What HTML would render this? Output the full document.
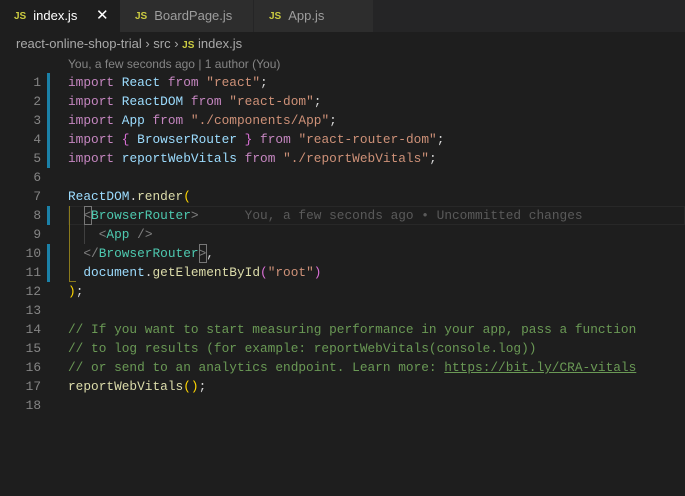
<!DOCTYPE html>
<html><head><meta charset="utf-8"><style>
*{margin:0;padding:0;box-sizing:border-box}
body{width:685px;height:496px;background:#1e1e1e;overflow:hidden;position:relative;font-family:"Liberation Sans",sans-serif}
.tabs{position:absolute;left:0;top:0;width:685px;height:32px;background:#252526}
.tab{position:absolute;top:0;height:32px;font-size:13px;line-height:32px;color:#9d9d9d}
.tab .js{color:#cbcb41;font-weight:bold;font-size:10px;margin-right:7px;vertical-align:1px}
.crumb{position:absolute;left:16px;top:35px;font-size:13px;color:#a9a9a9;line-height:18px}
.crumb .js{color:#cbcb41;font-weight:bold;font-size:10px}
.blame{position:absolute;left:68px;top:57px;font-size:12px;color:#858585}
.ln{position:absolute;left:0;width:41px;text-align:right;font-family:"Liberation Mono",monospace;font-size:12.8px;color:#858585;line-height:19px}
.code{position:absolute;left:68px;font-family:"Liberation Mono",monospace;font-size:12.8px;line-height:19px;white-space:pre;color:#d4d4d4}
.g{position:absolute;left:47px;width:3px;background:#1b81a8}
.k{color:#c586c0}.v{color:#9cdcfe}.s{color:#ce9178}.t{color:#4ec9b0}.f{color:#dcdcaa}.c{color:#6a9955}.y{color:#ffd700}.p{color:#da70d6}.b{color:#808080}
</style></head><body>
<div class="tabs">
<div class="tab" style="left:0;width:120px;background:#1e1e1e;color:#fff;padding-left:14px"><span class="js">JS</span>index.js<span style="position:absolute;left:96px;font-size:15px">✕</span></div>
<div class="tab" style="left:120px;width:133px;background:#2d2d2d;padding-left:15px"><span class="js">JS</span>BoardPage.js</div>
<div class="tab" style="left:254px;width:119px;background:#2d2d2d;padding-left:15px"><span class="js">JS</span>App.js</div>
</div>
<div class="crumb">react-online-shop-trial › src › <span class="js">JS</span> index.js</div>
<div class="blame">You, a few seconds ago | 1 author (You)</div>
<div class="g" style="top:73px;height:95px"></div>
<div class="g" style="top:206px;height:19px"></div>
<div class="g" style="top:244px;height:38px"></div>
<div style="position:absolute;left:68px;top:206px;width:617px;height:19px;border:1px solid #282828"></div>
<div style="position:absolute;left:69px;top:206px;width:1px;height:76px;background:#8a7a1c"></div>
<div style="position:absolute;left:69px;top:281px;width:7px;height:1px;background:#8a7a1c"></div>
<div style="position:absolute;left:84px;top:206px;width:8px;height:19px;border:1px solid #777"></div>
<div style="position:absolute;left:84px;top:225px;width:1px;height:19px;background:#404040"></div>
<div style="position:absolute;left:199px;top:244px;width:8px;height:19px;border:1px solid #777"></div>
<div class="ln" style="top:73px">1<br>2<br>3<br>4<br>5<br>6<br>7<br>8<br>9<br>10<br>11<br>12<br>13<br>14<br>15<br>16<br>17<br>18</div>
<div class="code" style="top:73px"><span class="k">import</span> <span class="v">React</span> <span class="k">from</span> <span class="s">"react"</span>;
<span class="k">import</span> <span class="v">ReactDOM</span> <span class="k">from</span> <span class="s">"react-dom"</span>;
<span class="k">import</span> <span class="v">App</span> <span class="k">from</span> <span class="s">"./components/App"</span>;
<span class="k">import</span> <span class="p">{</span> <span class="v">BrowserRouter</span> <span class="p">}</span> <span class="k">from</span> <span class="s">"react-router-dom"</span>;
<span class="k">import</span> <span class="v">reportWebVitals</span> <span class="k">from</span> <span class="s">"./reportWebVitals"</span>;

<span class="v">ReactDOM</span>.<span class="f">render</span><span class="y">(</span>
  <span class="b">&lt;</span><span class="t">BrowserRouter</span><span class="b">&gt;</span>      <span style="color:#5a5a5a">You, a few seconds ago • Uncommitted changes</span>
    <span class="b">&lt;</span><span class="t">App</span> <span class="b">/&gt;</span>
  <span class="b">&lt;/</span><span class="t">BrowserRouter</span><span class="b">&gt;</span>,
  <span class="v">document</span>.<span class="f">getElementById</span><span class="p">(</span><span class="s">"root"</span><span class="p">)</span>
<span class="y">)</span>;

<span class="c">// If you want to start measuring performance in your app, pass a function</span>
<span class="c">// to log results (for example: reportWebVitals(console.log))</span>
<span class="c">// or send to an analytics endpoint. Learn more: <u>https://bit.ly/CRA-vitals</u></span>
<span class="f">reportWebVitals</span><span class="y">()</span>;
</div>
</body></html>
